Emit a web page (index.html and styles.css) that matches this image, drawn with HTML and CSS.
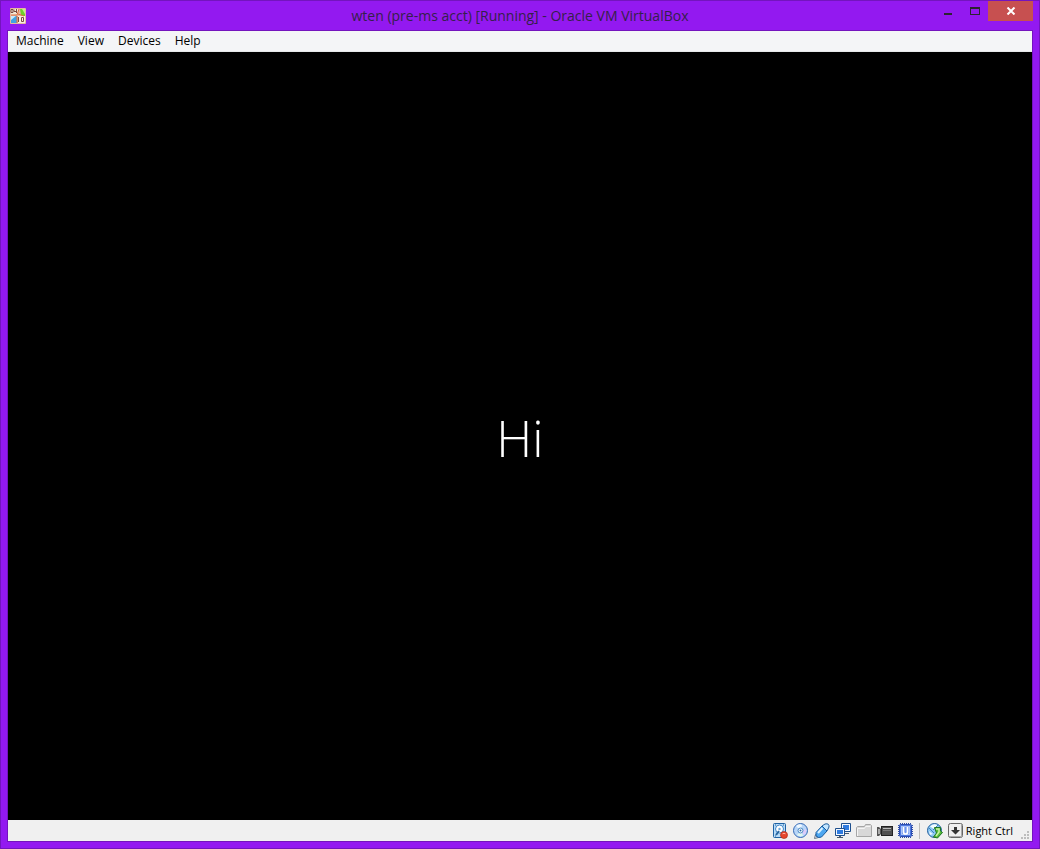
FILE: index.html
```html
<!DOCTYPE html>
<html lang="en">
<head>
<meta charset="utf-8">
<title>wten (pre-ms acct) [Running] - Oracle VM VirtualBox</title>
<link rel="stylesheet" href="styles.css">
</head>
<body>
<div class="window">
  <header class="titlebar">
    <svg class="app-icon" viewBox="0 0 16 16" aria-hidden="true">
      <rect width="16" height="16" rx="1" fill="#e6b9a0"/>
      <path d="M1 1h8L7 7H1z" fill="#f4ead6"/><path d="M10 1h5v8l-4-2z" fill="#6fd02c"/><path d="M12 1h3v5z" fill="#c4ee8f"/>
      <path d="M1 8h6v7H1z" fill="#3fa2e4"/><path d="M1 8h5l-5 4z" fill="#c5ecfc"/><path d="M8 8h7v7H8z" fill="#f8ece2"/>
      <path d="M9 1 7 7 1 7M8 6l6 2M7 8v7" fill="none" stroke="#dc6c3c" stroke-width="1"/>
      <path d="M1 1.500h2v3H1zM4 1.500v2h2M6.500 1v4M8.500 9v5M11.500 9.500h2v4h-2z" fill="none" stroke="#7b4a40" stroke-width="1"/>
    </svg>
    <h1 class="title">wten (pre-ms acct) [Running] - Oracle VM VirtualBox</h1>
    <div class="controls">
      <button class="control" type="button" aria-label="Minimize"><svg viewBox="0 0 10 8"><path d="M1 6h8v2H1z" fill="#2b2430"/></svg></button>
      <button class="control" type="button" aria-label="Maximize"><svg viewBox="0 0 10 8"><path fill-rule="evenodd" d="M0 0h10v8H0zM1 2v5h8V2z" fill="#2b2430"/></svg></button>
      <button class="control close" type="button" aria-label="Close"><svg viewBox="0 0 10 8"><path d="M1.500.5 8.500 7.500M8.500.5 1.500 7.500" stroke="#fff" stroke-width="2"/></svg></button>
    </div>
  </header>
  <div class="client">
    <nav class="menubar" aria-label="Menu">
      <button class="menu" type="button">Machine</button>
      <button class="menu" type="button">View</button>
      <button class="menu" type="button">Devices</button>
      <button class="menu" type="button">Help</button>
    </nav>
    <main class="screen"><p class="greeting">Hi</p></main>
    <footer class="statusbar">
      <button class="indicator" type="button" aria-label="Hard disks"><svg viewBox="0 0 16 16">
        <rect x="1.500" y=".5" width="12" height="14" rx="1" fill="#b9dcf8" stroke="#1f62a4"/>
        <circle cx="7.500" cy="6" r="4" fill="#fff" stroke="#3f86c8"/><circle cx="7.500" cy="6" r="1.200" fill="#6aa8dc"/>
        <path d="m4 12 3-4" stroke="#2866a0" stroke-width="2"/><path d="M3 2h1M11 2h1M3 13h1" stroke="#285c8c"/>
        <circle cx="12" cy="12" r="3.500" fill="#e5452c" stroke="#b02c18" stroke-width=".7"/><path d="M10.500 10.800q1.500-1 3 0" fill="none" stroke="#ffb09c"/></svg></button>
      <button class="indicator" type="button" aria-label="Optical disks"><svg viewBox="0 0 16 16">
        <circle cx="7.500" cy="7.500" r="7" fill="#b8d6f8" stroke="#3468b4"/><path d="M7.500 7.500 3 3q3-3 6-1z" fill="#eef8ff"/><path d="m8 8 5-2q1 4-2 6z" fill="#dccbfa"/><path d="m8 8 2 5q-4 1-6-1z" fill="#e0f6f0"/>
        <circle cx="7.500" cy="7.500" r="2.500" fill="#f8fcff" stroke="#4a88c4"/><circle cx="7.500" cy="7.500" r="1" fill="#286da7"/></svg></button>
      <button class="indicator" type="button" aria-label="USB devices"><svg viewBox="0 0 16 16">
        <path d="m.5 15.500 1-4 3 3z" fill="#f4f4f4" stroke="#667788"/><path d="m2 9.500 6-6.500 5 5-5.500 6q-3 1.500-5.500-1z" fill="#4ca6f0" stroke="#1b5b9c"/><path d="m8 3 3-2q4.500-1 4 3l-2 4z" fill="#c4e6ff" stroke="#1b5b9c"/><path d="m4 10 4.500-5" stroke="#dcf2ff" stroke-width="2"/></svg></button>
      <button class="indicator" type="button" aria-label="Network"><svg viewBox="0 0 16 16">
        <path d="M6.500.5h9v8h-9z" fill="#f2f8ff" stroke="#1e4f8d"/><path d="M8 2h6v5H8z" fill="#2f7be0"/><path d="M10 10.500h4" stroke="#4a5a6d"/>
        <path d="M.5 5.500h9v7h-9z" fill="#f2f8ff" stroke="#1e4f8d"/><path d="M2 7h6v4H2z" fill="#2f7be0"/><path d="M2 14.500h6M4 13.500h2" stroke="#4a5a6d"/></svg></button>
      <button class="indicator" type="button" aria-label="Shared folders"><svg viewBox="0 0 16 16">
        <path d="M.5 13.500v-9l1-1h7l1-2h5l1 1v11z" fill="#d8d8d8" stroke="#a6a6a6"/><path d="M1.500 13V5.500h7l1-2h5" fill="none" stroke="#f5f5f5"/></svg></button>
      <button class="indicator" type="button" aria-label="Video capture"><svg viewBox="0 0 16 16">
        <path d="M0 4h2l2 2v5l-2 2H0z" fill="#555"/><path d="M1 6h2v5H1z" fill="#aaa"/><rect x="4.500" y="3.500" width="11" height="9" fill="#505050" stroke="#222"/><path d="M6 5.500h8" stroke="#bbb"/><path d="M6 7.500h8" stroke="#777"/></svg></button>
      <button class="indicator" type="button" aria-label="Processor"><svg viewBox="0 0 16 16">
        <path d="M2 .5h12M2 14.500h12M.5 2v12M14.500 2v12" stroke="#2f4ea8" stroke-dasharray="1 1"/><rect x="1.500" y="1.500" width="12" height="12" rx="1" fill="#4c78e0" stroke="#2b4cb0"/><rect x="3.500" y="3.500" width="8" height="8" fill="#6e96ee" stroke="#aac4fa"/><path d="M5.500 4v5q0 2 2 2t2-2V4" fill="none" stroke="#fff" stroke-width="1.700"/></svg></button>
      <span class="separator"></span>
      <button class="indicator" type="button" aria-label="Mouse integration"><svg viewBox="0 0 16 16">
        <circle cx="7.500" cy="7.500" r="7" fill="#8cc8f4" stroke="#235f9c"/><path d="M3 3.500q4-4 8-1L7 6z" fill="#f2fbff"/><path d="m2 8 4 3-3 1z" fill="#e9f8ff"/><path d="m2 5 5 5M11 2 6 7" fill="none" stroke="#3f83bd"/>
        <path d="M7.500 4.500h6V8l2 1.500-5 5.500-4-1 3-4z" fill="#57bd38" stroke="#1f7526"/><path d="M9 6h3v3l-3 4" fill="none" stroke="#c9f5a5" stroke-width="1.500"/></svg></button>
      <button class="indicator host-key" type="button"><svg viewBox="0 0 16 16" aria-hidden="true">
        <rect x=".5" y=".5" width="14" height="14" rx="2" fill="#eee" stroke="#666"/><path d="M2 13.500h12M13.500 2v12" stroke="#aaa"/><path d="M6 4h3v3h3l-4.500 4.500L3 7h3z" fill="#333"/></svg><span>Right Ctrl</span></button>
      <svg class="grip" viewBox="0 0 8 8" aria-hidden="true"><path d="M6 0h2v2H6zM3 3h2v2H3zM6 3h2v2H6zM0 6h2v2H0zM3 6h2v2H3zM6 6h2v2H6z" fill="#bdbdbd"/></svg>
    </footer>
  </div>
</div>
</body>
</html>
```
FILE: styles.css
```css
* { box-sizing: border-box; }
body { margin: 0; font-family: "Open Sans", "Noto Sans", sans-serif; color: #000; }
button { margin: 0; padding: 0; border: 0; background: none; color: inherit; font: inherit; }
svg { display: block; }
.window {
  display: flex; flex-direction: column; min-height: 100vh;
  padding: 0 6px 6px; border: 1px solid #7414be; background: #9319f0;
}
.titlebar {
  display: grid; grid-template-columns: 1fr auto 1fr; align-items: center; height: 29px;
}
.app-icon { width: 16px; height: 16px; margin-left: 3px; }
.title { margin: 0; color: #35204a; font-size: 14px; line-height: 28px; font-weight: 400; white-space: nowrap; }
.controls { display: flex; justify-content: flex-end; align-self: start; }
.control { display: grid; place-items: center; width: 27px; height: 20px; }
.control svg { width: 10px; height: 8px; }
.close { width: 45px; background: #c75050; }
.client { display: flex; flex: 1; flex-direction: column; border: 1px solid #7414be; }
.menubar { display: flex; gap: 14px; height: 21px; padding: 0 8px; background: #f4f5f7; border-bottom: 1px solid #e7e9ea; }
.menu { font-size: 12px; line-height: 20px; }
.screen { display: grid; flex: 1; place-items: center; padding-top: 4px; background: #000; }
.greeting { margin: 0; color: #fff; font-size: 50px; line-height: 60px; font-weight: 300; }
.statusbar { display: flex; align-items: center; justify-content: flex-end; gap: 5px; height: 21px; padding-right: 3px; background: #f0f0f0; }
.indicator svg { width: 16px; height: 16px; }
.separator { width: 1px; height: 16px; margin-right: 2px; background: #bbb; }
.host-key { display: flex; align-items: center; gap: 2px; font-size: 11px; line-height: 20px; white-space: nowrap; }
.grip { align-self: end; width: 8px; height: 8px; margin: 0 0 2px 3px; }
```
